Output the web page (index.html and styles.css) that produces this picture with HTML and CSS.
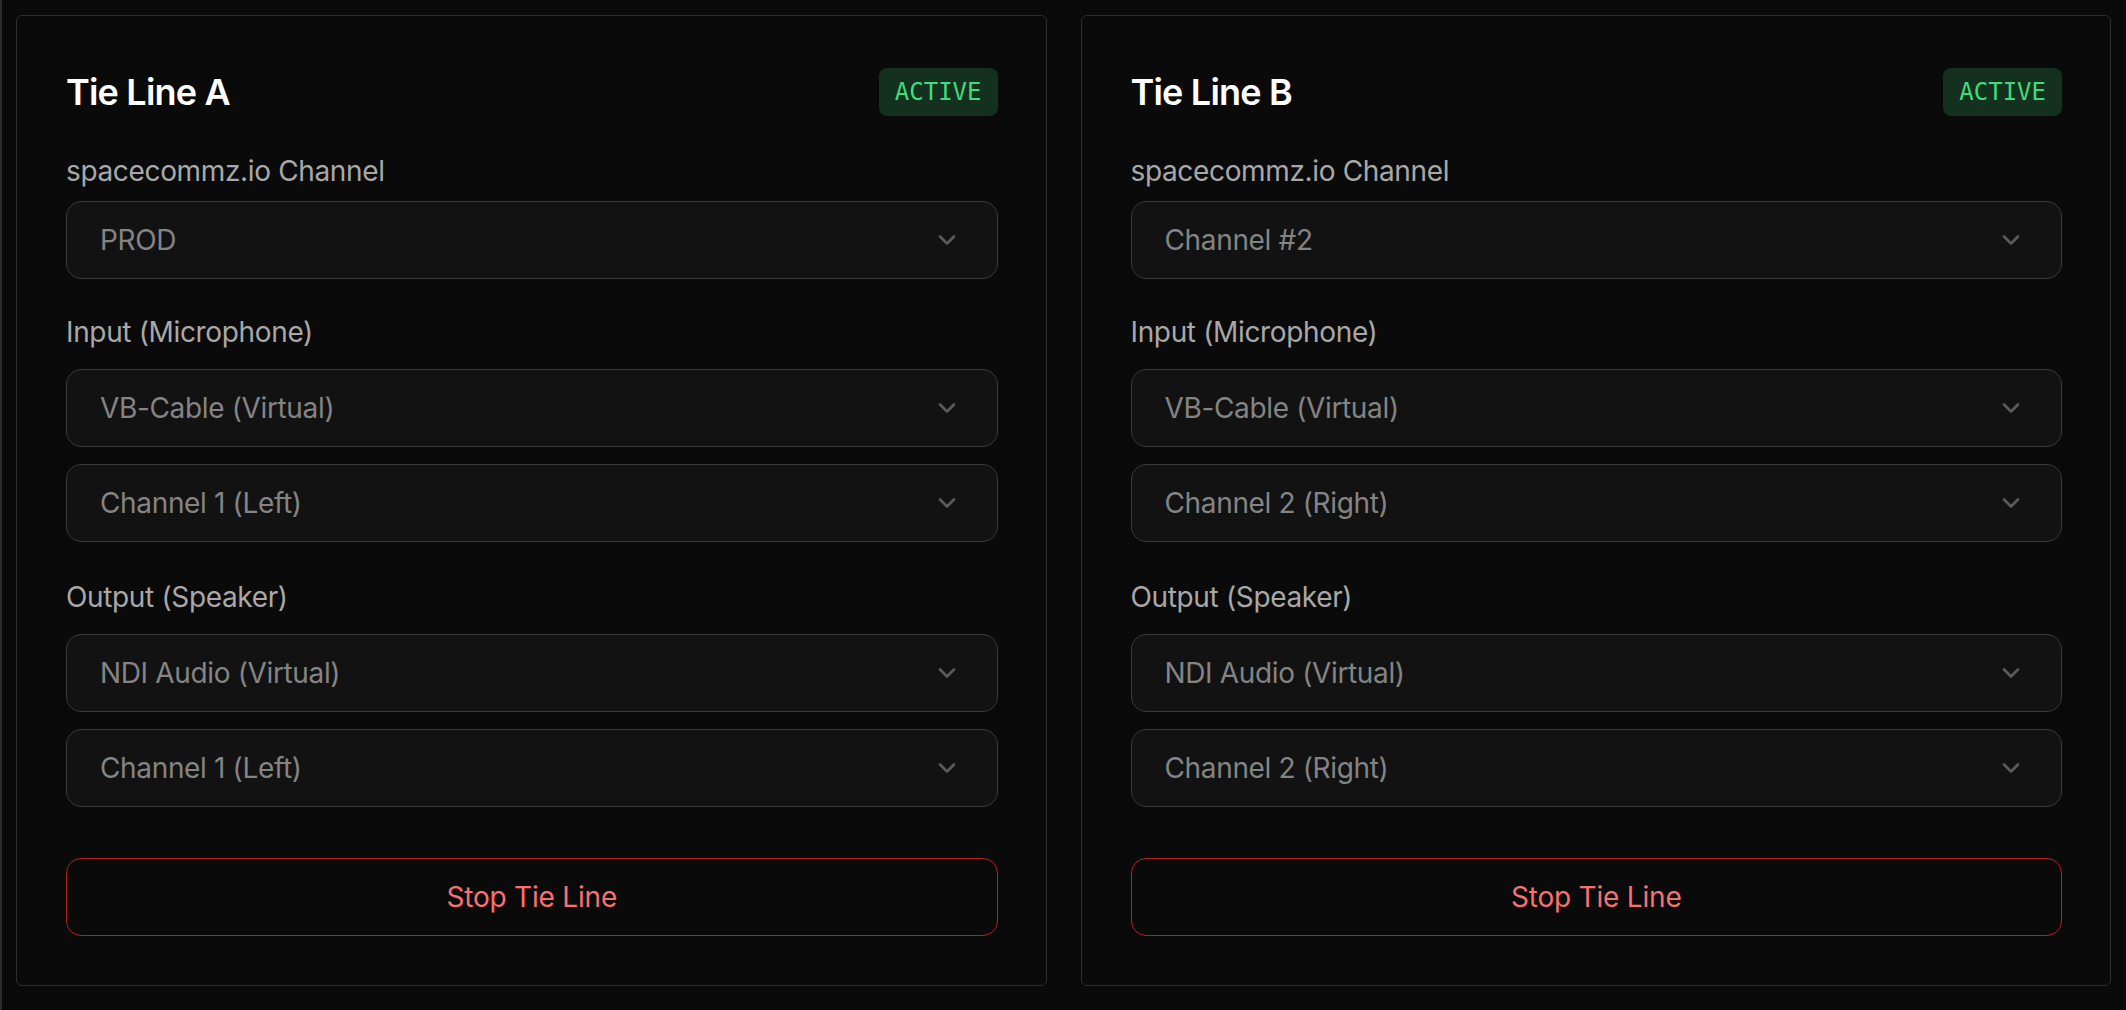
FILE: index.html
```html
<!DOCTYPE html>
<html lang="en">
<head>
<meta charset="utf-8">
<title>Tie Lines</title>
<link rel="stylesheet" href="styles.css">
</head>
<body>
<div class="page">
  <section class="card">
    <div class="card-head">
      <h2 class="card-title">Tie Line A</h2>
      <span class="badge">ACTIVE</span>
    </div>
    <div class="group group-first">
      <div class="label">spacecommz.io Channel</div>
      <div class="select"><span>PROD</span><svg class="chev" viewBox="0 0 24 24"><path d="m6 9 6 6 6-6"/></svg></div>
    </div>
    <div class="group">
      <div class="label">Input (Microphone)</div>
      <div class="select"><span>VB-Cable (Virtual)</span><svg class="chev" viewBox="0 0 24 24"><path d="m6 9 6 6 6-6"/></svg></div>
      <div class="select"><span>Channel 1 (Left)</span><svg class="chev" viewBox="0 0 24 24"><path d="m6 9 6 6 6-6"/></svg></div>
    </div>
    <div class="group">
      <div class="label">Output (Speaker)</div>
      <div class="select"><span>NDI Audio (Virtual)</span><svg class="chev" viewBox="0 0 24 24"><path d="m6 9 6 6 6-6"/></svg></div>
      <div class="select"><span>Channel 1 (Left)</span><svg class="chev" viewBox="0 0 24 24"><path d="m6 9 6 6 6-6"/></svg></div>
    </div>
    <button class="stop-btn">Stop Tie Line</button>
  </section>

  <section class="card">
    <div class="card-head">
      <h2 class="card-title">Tie Line B</h2>
      <span class="badge">ACTIVE</span>
    </div>
    <div class="group group-first">
      <div class="label">spacecommz.io Channel</div>
      <div class="select"><span>Channel #2</span><svg class="chev" viewBox="0 0 24 24"><path d="m6 9 6 6 6-6"/></svg></div>
    </div>
    <div class="group">
      <div class="label">Input (Microphone)</div>
      <div class="select"><span>VB-Cable (Virtual)</span><svg class="chev" viewBox="0 0 24 24"><path d="m6 9 6 6 6-6"/></svg></div>
      <div class="select"><span>Channel 2 (Right)</span><svg class="chev" viewBox="0 0 24 24"><path d="m6 9 6 6 6-6"/></svg></div>
    </div>
    <div class="group">
      <div class="label">Output (Speaker)</div>
      <div class="select"><span>NDI Audio (Virtual)</span><svg class="chev" viewBox="0 0 24 24"><path d="m6 9 6 6 6-6"/></svg></div>
      <div class="select"><span>Channel 2 (Right)</span><svg class="chev" viewBox="0 0 24 24"><path d="m6 9 6 6 6-6"/></svg></div>
    </div>
    <button class="stop-btn">Stop Tie Line</button>
  </section>
</div>
</body>
</html>
```

FILE: styles.css
```css
* { box-sizing: border-box; }

html, body {
  margin: 0;
  padding: 0;
  background: #0a0a0a;
}

body {
  font-family: Inter, "Noto Sans", "Liberation Sans", sans-serif;
  color: #fafafa;
  min-height: 1010px;
}

.page {
  display: grid;
  grid-template-columns: 1fr 1fr;
  column-gap: 34px;
  align-items: start;
  padding: 15px 15px 0 14px;
  border-left: 2px solid #2c2c2c;
  min-height: 1010px;
}

.card {
  display: flex;
  flex-direction: column;
  background: #0a0a0a;
  border: 1px solid #2e2e2e;
  border-radius: 6px;
  padding: 52px 48px 49px 49px;
}

.card-head {
  display: flex;
  align-items: center;
  justify-content: space-between;
  height: 48px;
}

.card-title {
  margin: 0;
  font-size: 36px;
  font-weight: 600;
  line-height: 48px;
  color: #ffffff;
  letter-spacing: -0.8px;
}

.badge {
  display: inline-block;
  height: 48px;
  line-height: 48px;
  padding: 0 16px;
  border-radius: 8px;
  background: #14301e;
  color: #3fdc7c;
  font-family: "DejaVu Sans Mono", "Liberation Mono", monospace;
  font-size: 24px;
}

.group {
  display: flex;
  flex-direction: column;
  gap: 17px;
  margin-top: 33px;
}

.group + .group + .group { margin-top: 35px; }

.group-first {
  gap: 10px;
  margin-top: 35px;
}

.label {
  font-size: 28px;
  line-height: 40px;
  color: #a8a8a8;
  letter-spacing: -0.35px;
}

.select {
  display: flex;
  align-items: center;
  justify-content: space-between;
  height: 78px;
  padding: 0 36px 0 33px;
  background: #121212;
  border: 1px solid #3a3a3a;
  border-radius: 15px;
  font-size: 28px;
  color: #848484;
  letter-spacing: -0.35px;
}

.chev {
  width: 28px;
  height: 28px;
  fill: none;
  stroke: #5a5a5a;
  stroke-width: 2.3;
  stroke-linecap: round;
  stroke-linejoin: round;
}

.stop-btn {
  margin-top: 51px;
  height: 78px;
  width: 100%;
  background: transparent;
  border: 1px solid #b42121;
  border-radius: 15px;
  color: #f87171;
  font-family: Inter, "Noto Sans", "Liberation Sans", sans-serif;
  font-size: 28px;
  letter-spacing: -0.2px;
  cursor: pointer;
}
```
